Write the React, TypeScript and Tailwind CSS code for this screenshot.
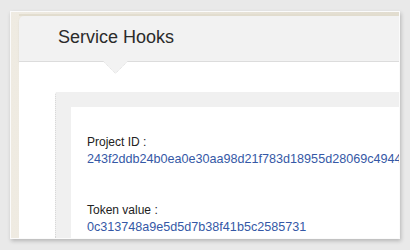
export default function App() {
  return (
    <div
      className="w-[410px] h-[250px] bg-[#e9e9e9] pt-[11px] pl-[10px] pr-[10px] overflow-hidden"
      style={{ fontFamily: '"Liberation Sans", Arial, sans-serif' }}
    >
      {/* Frame */}
      <div className="h-[228px] border border-[#fbfbfb] bg-gradient-to-r from-[#efebe2] to-[#e2ddd0] pt-[2px] pl-[8px] flex flex-col shadow-[1px_2px_4px_rgba(0,0,0,0.22)] overflow-hidden">
        <div className="h-[2px] bg-[#e2ddcf]" />
        {/* Header */}
        <div className="h-[46px] bg-[#f2f2f2] rounded-tl-[5px] border-b border-[#dcdcdc] shadow-[0_1px_2px_rgba(0,0,0,0.08)] pl-[39px] pt-[9px]">
          <h1 className="text-[18px] leading-[24px] text-[#2b2b2b]">Service Hooks</h1>
        </div>

        {/* Content */}
        <div className="relative flex-1 bg-white flex flex-col">
          <svg className="absolute left-[84px] -top-px" width="25" height="13" viewBox="0 0 25 13">
            <polygon points="0,0 25,0 12.5,12.5" fill="#f2f2f2" />
            <polyline points="0,0 12.5,12.5 25,0" fill="none" stroke="#e0e0e0" strokeDasharray="1 1" />
          </svg>

          <div className="flex-1 ml-[36px] mt-[30px] border-l border-dotted border-[#d8d8d8] bg-[#f0f0f0] rounded-tl-[3px] pl-[15px] pt-[15px] flex flex-col">
            <div className="flex-1 bg-white pl-[16px] pt-[27px] whitespace-nowrap overflow-hidden">
              <div className="text-[12px] leading-[17px] text-[#222]">Project ID :</div>
              <div className="text-[12.6px] leading-[17px] text-[#3558a6]">
                243f2ddb24b0ea0e30aa98d21f783d18955d28069c494417
              </div>
              <div className="mt-[34px] text-[12px] leading-[17px] text-[#222]">Token value :</div>
              <div className="text-[12.6px] leading-[17px] text-[#3558a6]">
                0c313748a9e5d5d7b38f41b5c2585731
              </div>
            </div>
          </div>
        </div>
      </div>
    </div>
  );
}
